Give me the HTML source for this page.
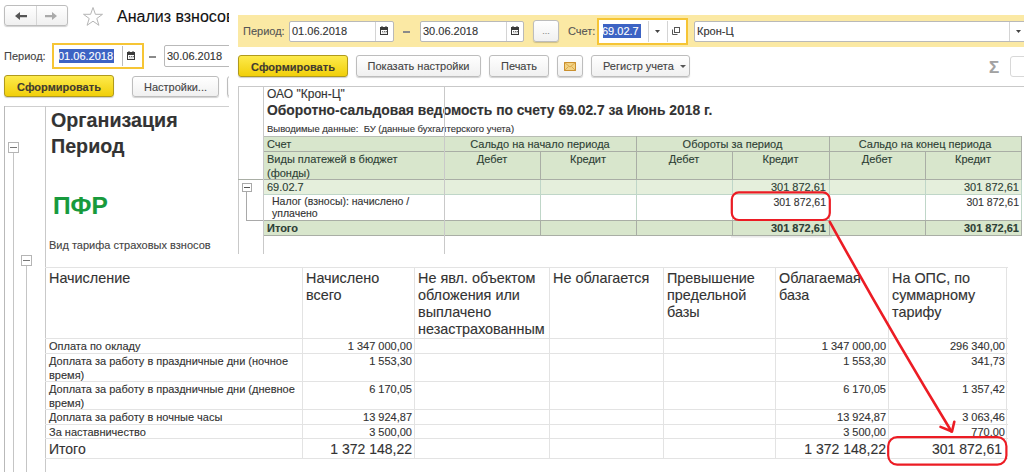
<!DOCTYPE html>
<html><head><meta charset="utf-8">
<style>
*{margin:0;padding:0;box-sizing:border-box}
html,body{width:1024px;height:472px;overflow:hidden;background:#fff;font-family:"Liberation Sans",sans-serif;color:#333;position:relative}
.a{-webkit-text-stroke:0.12px currentColor}
.a{position:absolute;white-space:nowrap}
.btn{position:absolute;border:1px solid #bdbdbd;border-radius:3px;background:linear-gradient(#fff,#f0f0f0);box-shadow:0 1px 1px rgba(0,0,0,.18)}
.ybtn{position:absolute;border:1px solid #b09a1c;border-radius:3px;background:linear-gradient(#fdea4c,#f1cf0a);box-shadow:0 1px 1px rgba(0,0,0,.2)}
.inp{position:absolute;border:1px solid #b9b9b9;border-radius:2px;background:#fff}
.t11{font-size:11px;line-height:13px}
.th{font-size:14.4px;line-height:17px;color:#333}
.td{font-size:11px;line-height:14px;color:#333}
.tt{font-size:14px;line-height:17px;color:#333}
.hl{position:absolute;background:#d9d9d9}
</style></head><body>
<svg width="0" height="0" style="position:absolute"><defs><g id="calicon"><rect x="0" y="1.5" width="8" height="2.5" fill="#3a3a3a"/><rect x="0.5" y="1.5" width="7" height="7" fill="none" stroke="#3a3a3a"/><rect x="1.5" y="0" width="1" height="2" fill="#3a3a3a"/><rect x="5.5" y="0" width="1" height="2" fill="#3a3a3a"/><rect x="2" y="5" width="1.2" height="1.2" fill="#777"/><rect x="4" y="5" width="1.2" height="1.2" fill="#777"/><rect x="5.8" y="5" width="1" height="1.2" fill="#555"/><rect x="2" y="6.5" width="4.5" height="0.8" fill="#bbb"/></g></defs></svg>

<!-- ===== LEFT WINDOW ===== -->
<div id="left" class="a" style="left:0;top:0;width:229px;height:472px;overflow:hidden">
  <!-- nav -->
  <div class="btn" style="left:4px;top:5px;width:64px;height:21px"></div>
  <div class="a" style="left:36px;top:6px;width:1px;height:19px;background:#d6d6d6"></div>
  <svg class="a" style="left:14px;top:11px" width="16" height="10" viewBox="0 0 16 10"><path d="M1 5 L6 1 L6 4 L13 4 L13 6.2 L6 6.2 L6 9 Z" fill="#555"/></svg>
  <svg class="a" style="left:43px;top:11px" width="16" height="10" viewBox="0 0 16 10"><path d="M14 5 L9 1 L9 4 L2 4 L2 6.2 L9 6.2 L9 9 Z" fill="#aaa"/></svg>
  <svg class="a" style="left:82px;top:6px" width="22" height="21" viewBox="0 0 22 21"><path d="M11 1.5 L13.4 8.3 L20.5 8.3 L14.8 12.5 L16.9 19.3 L11 15.2 L5.1 19.3 L7.2 12.5 L1.5 8.3 L8.6 8.3 Z" fill="none" stroke="#b5b5b5" stroke-width="1"/></svg>
  <div class="a" style="left:117px;top:7px;font-size:16px;line-height:20px;color:#111">Анализ взносов</div>

  <!-- period -->
  <div class="a t11" style="left:4px;top:50px;color:#444">Период:</div>
  <div class="a" style="left:52px;top:43px;width:92px;height:26px;border:2px solid #f6c535"></div>
  <div class="a" style="left:55px;top:46px;width:86px;height:20px;background:#fff"></div>
  <div class="a" style="left:59px;top:49px;width:55px;height:14px;background:#3c63c4"></div>
  <div class="a t11" style="left:58px;top:50px;color:#fff">01.06.2018</div>
  <div class="a" style="left:122px;top:46px;width:1px;height:20px;background:#bcbcbc"></div>
  <svg class="a" style="left:127px;top:51px" width="8" height="9" viewBox="0 0 8 9"><use href="#calicon"/></svg>
  <div class="a" style="left:149px;top:56px;width:7px;height:1.5px;background:#8a8a8a"></div>
  <div class="inp" style="left:164px;top:45px;width:80px;height:22px"></div>
  <div class="a t11" style="left:167px;top:50px;color:#333">30.06.2018</div>

  <!-- buttons -->
  <div class="ybtn" style="left:4px;top:75px;width:110px;height:22px"></div>
  <div class="a" style="left:4px;top:80px;width:110px;text-align:center;font-size:11px;font-weight:bold;line-height:14px;color:#413b30">Сформировать</div>
  <div class="btn" style="left:132px;top:76px;width:87px;height:21px"></div>
  <div class="a t11" style="left:132px;top:81px;width:87px;text-align:center;color:#444">Настройки...</div>
  <div class="btn" style="left:227px;top:76px;width:40px;height:21px"></div>

  <!-- report frame -->
  <div class="a" style="left:4px;top:106px;width:230px;height:1px;background:#cfcfcf"></div>
  <div class="a" style="left:4px;top:106px;width:1px;height:370px;background:#b9b9b9"></div>
  <div class="a" style="left:45px;top:106px;width:1px;height:370px;background:#c9c9c9"></div>
  <!-- tree -->
  <div class="a" style="left:8px;top:142px;width:11px;height:11px;border:1px solid #b5b5b5;background:#fff"></div>
  <div class="a" style="left:10px;top:147px;width:7px;height:1px;background:#777"></div>
  <div class="a" style="left:13px;top:153px;width:1px;height:330px;background:#c5c5c5"></div>
  <div class="a" style="left:21px;top:255px;width:11px;height:11px;border:1px solid #b5b5b5;background:#fff"></div>
  <div class="a" style="left:23px;top:260px;width:7px;height:1px;background:#777"></div>
  <div class="a" style="left:26px;top:266px;width:1px;height:220px;background:#c5c5c5"></div>

  <div class="a" style="left:51px;top:109px;font-size:19.7px;font-weight:bold;line-height:22px;color:#333">Организация</div>
  <div class="a" style="left:51px;top:135px;font-size:19.7px;font-weight:bold;line-height:22px;color:#333">Период</div>
  <div class="a" style="left:53px;top:192px;font-size:24.5px;font-weight:bold;line-height:28px;color:#179a3c">ПФР</div>
  <div class="a t11" style="left:49px;top:239px;color:#444">Вид тарифа страховых взносов</div>
</div>

<!-- ===== LOWER TABLE ===== -->
<div id="lower" class="a" style="left:0;top:0;width:1024px;height:472px">
<div class="a" style="left:45px;top:267px;width:963px;height:1px;background:#e3e3e3"></div>
<div class="a" style="left:45px;top:338px;width:963px;height:1px;background:#e3e3e3"></div>
<div class="a" style="left:45px;top:353px;width:963px;height:1px;background:#e3e3e3"></div>
<div class="a" style="left:45px;top:381px;width:963px;height:1px;background:#e3e3e3"></div>
<div class="a" style="left:45px;top:409px;width:963px;height:1px;background:#e3e3e3"></div>
<div class="a" style="left:45px;top:424px;width:963px;height:1px;background:#e3e3e3"></div>
<div class="a" style="left:45px;top:438px;width:963px;height:1px;background:#e3e3e3"></div>
<div class="a" style="left:45px;top:458px;width:963px;height:1px;background:#e3e3e3"></div>
<div class="a" style="left:302px;top:267px;width:1px;height:192px;background:#e3e3e3"></div>
<div class="a" style="left:414px;top:267px;width:1px;height:192px;background:#e3e3e3"></div>
<div class="a" style="left:549px;top:267px;width:1px;height:192px;background:#e3e3e3"></div>
<div class="a" style="left:663px;top:267px;width:1px;height:192px;background:#e3e3e3"></div>
<div class="a" style="left:775px;top:267px;width:1px;height:192px;background:#e3e3e3"></div>
<div class="a" style="left:888px;top:267px;width:1px;height:192px;background:#e3e3e3"></div>
<div class="a" style="left:1006px;top:267px;width:1px;height:192px;background:#e3e3e3"></div>
<div class="a th" style="left:49px;top:270px">Начисление</div>
<div class="a th" style="left:306px;top:270px">Начислено<br>всего</div>
<div class="a th" style="left:418px;top:270px">Не явл. объектом<br>обложения или<br>выплачено<br>незастрахованным</div>
<div class="a th" style="left:553px;top:270px">Не облагается</div>
<div class="a th" style="left:667px;top:270px">Превышение<br>предельной<br>базы</div>
<div class="a th" style="left:779px;top:270px">Облагаемая<br>база</div>
<div class="a th" style="left:892px;top:270px">На ОПС, по<br>суммарному<br>тарифу</div>
<div class="a td" style="left:49px;top:339px">Оплата по окладу</div>
<div class="a td" style="right:612px;top:339px;text-align:right">1 347 000,00</div>
<div class="a td" style="right:138px;top:339px;text-align:right">1 347 000,00</div>
<div class="a td" style="right:19px;top:339px;text-align:right">296 340,00</div>
<div class="a td" style="left:49px;top:354px">Доплата за работу в праздничные дни (ночное<br>время)</div>
<div class="a td" style="right:612px;top:354px;text-align:right">1 553,30</div>
<div class="a td" style="right:138px;top:354px;text-align:right">1 553,30</div>
<div class="a td" style="right:19px;top:354px;text-align:right">341,73</div>
<div class="a td" style="left:49px;top:382px">Доплата за работу в праздничные дни (дневное<br>время)</div>
<div class="a td" style="right:612px;top:382px;text-align:right">6 170,05</div>
<div class="a td" style="right:138px;top:382px;text-align:right">6 170,05</div>
<div class="a td" style="right:19px;top:382px;text-align:right">1 357,42</div>
<div class="a td" style="left:49px;top:410px">Доплата за работу в ночные часы</div>
<div class="a td" style="right:612px;top:410px;text-align:right">13 924,87</div>
<div class="a td" style="right:138px;top:410px;text-align:right">13 924,87</div>
<div class="a td" style="right:19px;top:410px;text-align:right">3 063,46</div>
<div class="a td" style="left:49px;top:425px">За наставничество</div>
<div class="a td" style="right:612px;top:425px;text-align:right">3 500,00</div>
<div class="a td" style="right:138px;top:425px;text-align:right">3 500,00</div>
<div class="a td" style="right:19px;top:425px;text-align:right">770,00</div>
<div class="a tt" style="left:49px;top:441px">Итого</div>
<div class="a tt" style="right:612px;top:441px">1 372 148,22</div>
<div class="a tt" style="right:138px;top:441px">1 372 148,22</div>
<div class="a tt" style="right:22px;top:441px">301 872,61</div>
</div>

<!-- ===== OSV WINDOW ===== -->
<div id="osv" class="a" style="left:0;top:0;width:1024px;height:253px">
<div class="a" style="left:229px;top:0;width:795px;height:254px;background:#fff"></div>
<div class="a" style="left:238px;top:15px;width:786px;height:32px;background:#fbe9a4"></div>
<div class="a t11" style="left:243px;top:25px;color:#555">Период:</div>
<div class="inp" style="left:289px;top:21px;width:105px;height:21px"></div>
<div class="a" style="left:375px;top:22px;width:1px;height:19px;background:#d4d4d4"></div>
<div class="a t11" style="left:292px;top:25px;color:#333">01.06.2018</div>
<svg class="a cal" style="left:380px;top:26px" width="8" height="9" viewBox="0 0 8 9"><use href="#calicon"/></svg>
<div class="a" style="left:403px;top:31px;width:7px;height:1.5px;background:#8a8a8a"></div>
<div class="inp" style="left:420px;top:21px;width:104px;height:21px"></div>
<div class="a" style="left:506px;top:22px;width:1px;height:19px;background:#d4d4d4"></div>
<div class="a t11" style="left:423px;top:25px;color:#333">30.06.2018</div>
<svg class="a cal" style="left:511px;top:26px" width="8" height="9" viewBox="0 0 8 9"><use href="#calicon"/></svg>
<div class="btn" style="left:533px;top:20px;width:26px;height:22px"></div>
<div class="a" style="left:533px;top:25px;width:26px;text-align:center;font-size:9px;line-height:12px;color:#888">...</div>
<div class="a t11" style="left:568px;top:25px;color:#555">Счет:</div>
<div class="a" style="left:597px;top:18px;width:91px;height:27px;border:2px solid #f6c535;background:#fff"></div>
<div class="a" style="left:603px;top:24px;width:38px;height:14px;background:#3c63c4"></div>
<div class="a t11" style="left:602px;top:25px;color:#fff">69.02.7</div>
<div class="a" style="left:648px;top:21px;width:1px;height:21px;background:#d4d4d4"></div>
<div class="a" style="left:667px;top:21px;width:1px;height:21px;background:#d4d4d4"></div>
<svg class="a" style="left:655px;top:30px" width="5" height="3" viewBox="0 0 5 3"><path d="M0 0 L5 0 L2.5 3 Z" fill="#444"/></svg>
<svg class="a" style="left:671px;top:26px" width="10" height="10" viewBox="0 0 10 10"><rect x="3.5" y="1.5" width="5" height="5" fill="none" stroke="#555"/><path d="M1.5 3.5 V8.5 H6.5" fill="none" stroke="#555"/></svg>
<div class="inp" style="left:694px;top:21px;width:340px;height:21px"></div>
<div class="a" style="left:1009px;top:22px;width:1px;height:19px;background:#d4d4d4"></div>
<div class="a t11" style="left:697px;top:25px;color:#333">Крон-Ц</div>
<svg class="a" style="left:1016px;top:30px" width="5" height="3" viewBox="0 0 5 3"><path d="M0 0 L5 0 L2.5 3 Z" fill="#444"/></svg>
<div class="ybtn" style="left:238px;top:55px;width:110px;height:22px"></div>
<div class="a" style="left:238px;top:60px;width:110px;text-align:center;font-size:11px;font-weight:bold;line-height:14px;color:#413b30">Сформировать</div>
<div class="btn" style="left:356px;top:55px;width:125px;height:22px"></div>
<div class="a t11" style="left:356px;top:60px;width:125px;text-align:center;color:#444">Показать настройки</div>
<div class="btn" style="left:489px;top:55px;width:60px;height:22px"></div>
<div class="a t11" style="left:489px;top:60px;width:60px;text-align:center;color:#444">Печать</div>
<div class="btn" style="left:557px;top:55px;width:26px;height:22px"></div>
<svg class="a" style="left:564px;top:62px" width="12" height="9" viewBox="0 0 12 9"><rect x="0.5" y="0.5" width="11" height="8" fill="#f2d283" stroke="#c98f2e"/><path d="M0.5 0.5 L6 5 L11.5 0.5 M0.5 8.5 L4.5 4.5 M11.5 8.5 L7.5 4.5" fill="none" stroke="#d9a445" stroke-width="0.9"/></svg>
<div class="btn" style="left:591px;top:55px;width:99px;height:22px"></div>
<div class="a t11" style="left:603px;top:60px;color:#444">Регистр учета</div>
<svg class="a" style="left:680px;top:65px" width="6" height="3" viewBox="0 0 6 3"><path d="M0 0 L6 0 L3 3 Z" fill="#555"/></svg>
<div class="a" style="left:989px;top:58px;font-size:17px;line-height:20px;color:#a2a2a2;font-weight:bold">&Sigma;</div>
<div class="inp" style="left:1010px;top:56px;width:30px;height:21px;border-radius:3px;border-color:#d8d8d8"></div>
<div class="a" style="left:238px;top:86px;width:786px;height:1px;background:#c9c9c9"></div>
<div class="a" style="left:238px;top:86px;width:1px;height:168px;background:#c9c9c9"></div>
<div class="a" style="left:267px;top:87px;font-size:12px;line-height:14px;color:#333">ОАО "Крон-Ц"</div>
<div class="a" style="left:267px;top:102px;font-size:13.86px;font-weight:bold;line-height:16px;color:#333">Оборотно-сальдовая ведомость по счету 69.02.7 за Июнь 2018 г.</div>
<div class="a" style="left:267px;top:123px;font-size:9.5px;line-height:11px;color:#333">Выводимые данные:&nbsp; БУ (данные бухгалтерского учета)</div>
<div class="a" style="left:263px;top:136px;width:759px;height:44px;background:#d8e6cc"></div>
<div class="a" style="left:263px;top:180px;width:759px;height:14px;background:#e5efdc"></div>
<div class="a" style="left:263px;top:220px;width:759px;height:16px;background:#d8e6cc"></div>
<div class="a" style="left:263px;top:136px;width:759px;height:1px;background:#b8bdb4"></div>
<div class="a" style="left:263px;top:151px;width:759px;height:1px;background:#a9aea5"></div>
<div class="a" style="left:238px;top:179px;width:784px;height:1px;background:#a9aea5"></div>
<div class="a" style="left:263px;top:194px;width:759px;height:1px;background:#bfd6c8"></div>
<div class="a" style="left:263px;top:220px;width:759px;height:1px;background:#a9aea5"></div>
<div class="a" style="left:263px;top:235px;width:759px;height:1px;background:#a9aea5"></div>
<div class="a" style="left:636px;top:136px;width:1px;height:44px;background:#a9aea5"></div>
<div class="a" style="left:636px;top:180px;width:1px;height:40px;background:#bfd6c8"></div>
<div class="a" style="left:636px;top:220px;width:1px;height:16px;background:#a9aea5"></div>
<div class="a" style="left:829px;top:136px;width:1px;height:44px;background:#a9aea5"></div>
<div class="a" style="left:829px;top:180px;width:1px;height:40px;background:#bfd6c8"></div>
<div class="a" style="left:829px;top:220px;width:1px;height:16px;background:#a9aea5"></div>
<div class="a" style="left:1021px;top:136px;width:1px;height:44px;background:#a9aea5"></div>
<div class="a" style="left:1021px;top:180px;width:1px;height:40px;background:#bfd6c8"></div>
<div class="a" style="left:1021px;top:220px;width:1px;height:16px;background:#a9aea5"></div>
<div class="a" style="left:540px;top:151px;width:1px;height:29px;background:#a9aea5"></div>
<div class="a" style="left:540px;top:180px;width:1px;height:40px;background:#bfd6c8"></div>
<div class="a" style="left:540px;top:220px;width:1px;height:16px;background:#a9aea5"></div>
<div class="a" style="left:732px;top:151px;width:1px;height:29px;background:#a9aea5"></div>
<div class="a" style="left:732px;top:180px;width:1px;height:40px;background:#bfd6c8"></div>
<div class="a" style="left:732px;top:220px;width:1px;height:16px;background:#a9aea5"></div>
<div class="a" style="left:925px;top:151px;width:1px;height:29px;background:#a9aea5"></div>
<div class="a" style="left:925px;top:180px;width:1px;height:40px;background:#bfd6c8"></div>
<div class="a" style="left:925px;top:220px;width:1px;height:16px;background:#a9aea5"></div>
<div class="a" style="left:263px;top:86px;width:1px;height:168px;background:#c9c9c9"></div>
<div class="a" style="left:444px;top:86px;width:1px;height:168px;background:#c9c9c9"></div>
<div class="a" style="left:242px;top:183px;width:10px;height:9px;border:1px solid #a9a9a9;background:#fff"></div>
<div class="a" style="left:244px;top:187px;width:6px;height:1px;background:#555"></div>
<div class="a" style="left:246px;top:192px;width:1px;height:29px;background:#a9a9a9"></div>
<div class="a" style="left:246px;top:220px;width:17px;height:1px;background:#a9a9a9"></div>
<div class="a t11" style="left:267px;top:138px;color:#2d4035">Счет</div>
<div class="a t11" style="left:444px;top:138px;width:192px;text-align:center;color:#2d4035">Сальдо на начало периода</div>
<div class="a t11" style="left:636px;top:138px;width:193px;text-align:center;color:#2d4035">Обороты за период</div>
<div class="a t11" style="left:829px;top:138px;width:192px;text-align:center;color:#2d4035">Сальдо на конец периода</div>
<div class="a" style="left:267px;top:152px;font-size:11px;line-height:14px;color:#2d4035">Виды платежей в бюджет<br>(фонды)</div>
<div class="a t11" style="left:444px;top:153px;width:96px;text-align:center;color:#2d4035">Дебет</div>
<div class="a t11" style="left:540px;top:153px;width:96px;text-align:center;color:#2d4035">Кредит</div>
<div class="a t11" style="left:636px;top:153px;width:96px;text-align:center;color:#2d4035">Дебет</div>
<div class="a t11" style="left:732px;top:153px;width:97px;text-align:center;color:#2d4035">Кредит</div>
<div class="a t11" style="left:829px;top:153px;width:96px;text-align:center;color:#2d4035">Дебет</div>
<div class="a t11" style="left:925px;top:153px;width:96px;text-align:center;color:#2d4035">Кредит</div>
<div class="a t11" style="left:267px;top:181px;color:#2d4035">69.02.7</div>
<div class="a t11" style="right:198px;top:181px;color:#2d4035">301 872,61</div>
<div class="a t11" style="right:5px;top:181px;color:#2d4035">301 872,61</div>
<div class="a" style="left:272px;top:195px;font-size:10.5px;line-height:12px;color:#333">Налог (взносы): начислено /<br>уплачено</div>
<div class="a t11" style="right:198px;top:196px;color:#333;font-size:10.5px">301 872,61</div>
<div class="a t11" style="right:5px;top:196px;color:#333;font-size:10.5px">301 872,61</div>
<div class="a t11" style="left:267px;top:222px;font-weight:bold;color:#2d4035">Итого</div>
<div class="a t11" style="right:198px;top:222px;font-weight:bold;color:#2d4035">301 872,61</div>
<div class="a t11" style="right:5px;top:222px;font-weight:bold;color:#2d4035">301 872,61</div>
</div>

<div class="a" style="left:731px;top:236px;width:101px;height:2px;background:linear-gradient(#e6e6e6,#f6f6f6)"></div>
<!-- ===== RED ANNOTATIONS ===== -->
<svg class="a" style="left:0;top:0" width="1024" height="472" viewBox="0 0 1024 472">
  <g fill="none" stroke="#ec1c24" stroke-width="2.2" stroke-linecap="round" stroke-linejoin="round">
  <rect x="731.8" y="192.4" width="98" height="27.6" rx="7" ry="7"/>
  <rect x="888.2" y="437.2" width="118.2" height="27.4" rx="9" ry="9"/>
  <path d="M829.8 221.8 Q887.6 326.6 951.5 431.5" stroke-width="2.6"/>
  <path d="M940.5 426.9 L952 431.5 L954.3 421.7" stroke-width="2.6"/>
  </g>
</svg>
</body></html>
